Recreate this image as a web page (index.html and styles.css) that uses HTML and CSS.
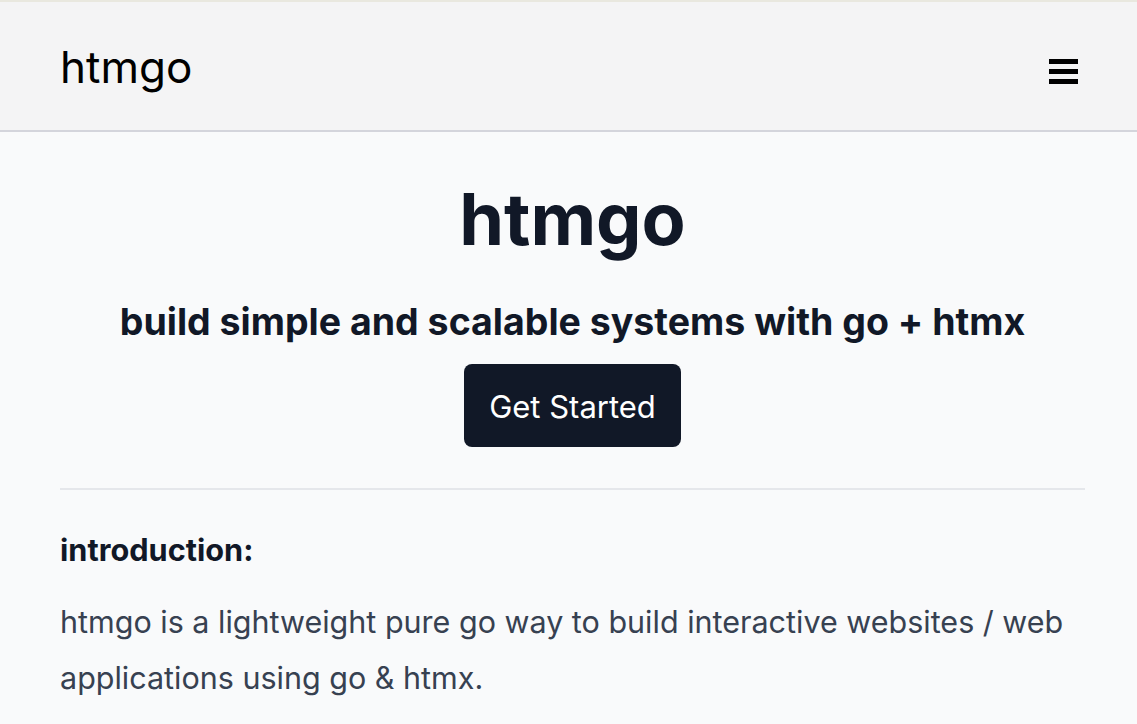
FILE: index.html
```html
<!DOCTYPE html>
<html lang="en">
<head>
<meta charset="utf-8">
<title>htmgo</title>
<link rel="stylesheet" href="styles.css">
</head>
<body>
<div class="topstrip"></div>
<nav class="nav">
  <a class="logo" href="#">htmgo</a>
  <button class="menu" aria-label="menu">
    <span class="bar"></span><span class="bar"></span><span class="bar"></span>
  </button>
</nav>
<main class="main">
  <section class="hero">
    <h1 class="title">htmgo</h1>
    <h2 class="subtitle">build simple and scalable systems with go + htmx</h2>
    <a class="cta" href="#">Get Started</a>
  </section>
  <hr class="divider">
  <section class="intro">
    <h3 class="intro-title">introduction:</h3>
    <p class="intro-text">htmgo is a lightweight pure go way to build interactive websites / web applications using go &amp; htmx.</p>
  </section>
</main>
</body>
</html>
```
FILE: styles.css
```css
* { box-sizing: border-box; }
html, body { margin: 0; padding: 0; }
body {
  font-family: Inter, "Noto Sans", sans-serif;
  background: #f9fafb;
  color: #111827;
  overflow: hidden;
}
.topstrip { height: 2px; background: #e9e8df; }
.nav {
  height: 130px;
  background: #f4f4f5;
  border-bottom: 2px solid #d4d5dc;
  display: flex;
  align-items: center;
  justify-content: space-between;
  padding: 0 59px 0 60px;
}
.logo {
  font-size: 44px;
  color: #000;
  text-decoration: none;
  line-height: 1;
  margin-top: 2px;
}
.menu {
  background: none;
  border: 0;
  padding: 0;
  display: flex;
  flex-direction: column;
  gap: 5.5px;
  width: 29px;
  margin-top: 11px;
}
.bar { display: block; height: 4.5px; background: #000; width: 29px; }
.main { padding: 0 52px 0 60px; }
.hero {
  display: flex;
  flex-direction: column;
  align-items: center;
  padding-top: 43px;
}
.title {
  margin: 0;
  font-size: 72px;
  font-weight: 700;
  line-height: 88px;
}
.subtitle {
  margin: 37px 0 0;
  font-size: 37.5px;
  font-weight: 700;
  line-height: 44px;
}
.cta {
  margin-top: 20px;
  background: #111827;
  color: #fff;
  text-decoration: none;
  font-size: 31px;
  line-height: 48px;
  padding: 19px 25px 16px;
  border-radius: 8px;
}
.divider {
  margin: 41px 0 0;
  border: 0;
  border-top: 2px solid #e5e7eb;
}
.intro { padding-top: 40px; }
.intro-title {
  margin: 0;
  font-size: 30.7px;
  font-weight: 700;
  line-height: 40px;
}
.intro-text {
  margin: 24px 0 0;
  font-size: 30.5px;
  line-height: 56px;
  color: #374151;
}
```
